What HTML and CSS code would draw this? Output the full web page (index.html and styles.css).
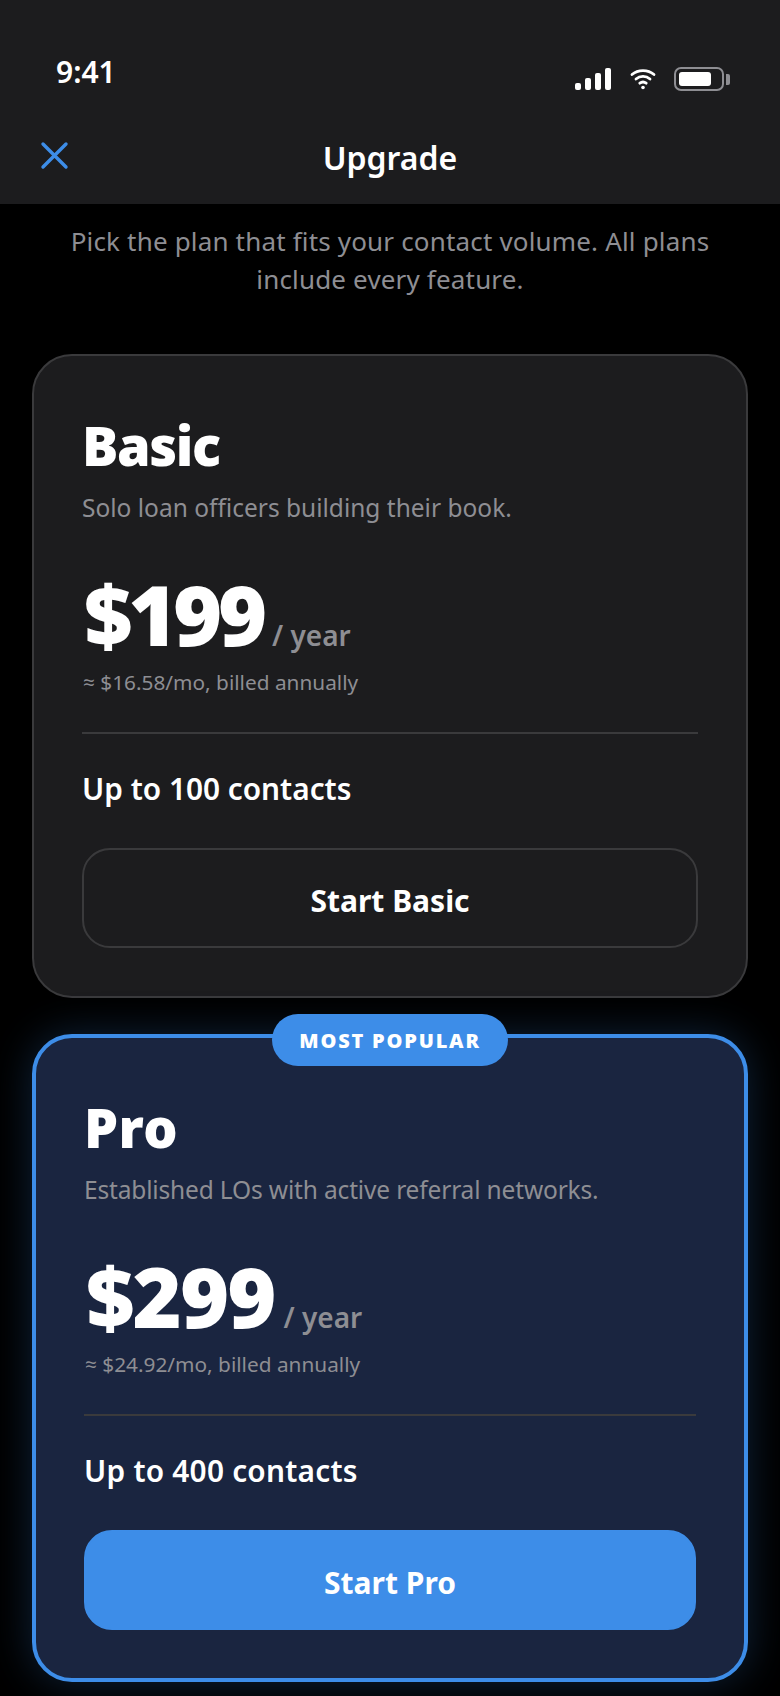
FILE: index.html
```html
<!DOCTYPE html>
<html lang="en">
<head>
    <meta charset="UTF-8">
    <meta name="viewport" content="width=device-width, initial-scale=1.0">
    <title>Upgrade</title>
    <link rel="stylesheet" href="styles.css">
</head>
<body>
    <div class="screen">
        <header class="top">
            <div class="status">
                <span class="time">9:41</span>
                <div class="status-icons">
                    <svg class="signal" width="37" height="22" viewBox="0 0 37 22" fill="#fff">
                        <rect x="0" y="15" width="6" height="7" rx="2"/>
                        <rect x="10" y="10" width="6" height="12" rx="2"/>
                        <rect x="20" y="5" width="6" height="17" rx="2"/>
                        <rect x="30" y="0" width="6" height="22" rx="2"/>
                    </svg>
                    <svg class="wifi" width="26" height="22" viewBox="0 0 26 22" fill="none" stroke="#fff" stroke-width="2.8" stroke-linecap="round">
                        <path d="M2 6.5C8 1.2 18 1.2 24 6.5"/>
                        <path d="M6 11C10 7.6 16 7.6 20 11"/>
                        <path d="M9.8 15.2C11.6 13.8 14.4 13.8 16.2 15.2"/>
                        <circle cx="13" cy="19.5" r="1.8" fill="#fff" stroke="none"/>
                    </svg>
                    <div class="battery"><div class="battery-fill"></div></div>
                    <div class="battery-cap"></div>
                </div>
            </div>
            <div class="nav">
                <svg class="close" width="30" height="30" viewBox="0 0 30 30" fill="none" stroke="#3d8de8" stroke-width="3.4" stroke-linecap="round">
                    <path d="M3 3L26 26M26 3L3 26"/>
                </svg>
                <h1>Upgrade</h1>
            </div>
        </header>
        <main class="content">
            <p class="intro">Pick the plan that fits your contact volume. All plans include every feature.</p>
            <section class="card">
                <h2>Basic</h2>
                <p class="tagline">Solo loan officers building their book.</p>
                <div class="price"><strong>$199</strong><span>/ year</span></div>
                <p class="monthly">≈ $16.58/mo, billed annually</p>
                <hr>
                <p class="limit">Up to 100 contacts</p>
                <div class="btn">Start Basic</div>
            </section>
            <section class="card pro">
                <div class="badge">MOST POPULAR</div>
                <h2>Pro</h2>
                <p class="tagline">Established LOs with active referral networks.</p>
                <div class="price"><strong>$299</strong><span>/ year</span></div>
                <p class="monthly">≈ $24.92/mo, billed annually</p>
                <hr>
                <p class="limit">Up to 400 contacts</p>
                <div class="btn">Start Pro</div>
            </section>
        </main>
    </div>
</body>
</html>
```

FILE: styles.css
```css
* {
    margin: 0;
    padding: 0;
    box-sizing: border-box;
}
body {
    background: #000;
    color: #fff;
    font-family: "Noto Sans", "Open Sans", sans-serif;
}
.screen {
    width: 780px;
    height: 1696px;
    overflow: hidden;
}
.top {
    height: 204px;
    background: #1c1c1e;
    padding: 0 50px 0 40px;
    position: relative;
}
.status {
    height: 124px;
    padding: 52px 0 0 16px;
    display: flex;
    justify-content: space-between;
}
.time {
    font-size: 30px;
    line-height: 40px;
    font-weight: 600;
}
.status-icons {
    display: flex;
    align-items: center;
    height: 32px;
    margin-top: 11px;
}
.wifi {
    margin-left: 18px;
}
.battery {
    width: 50px;
    height: 24px;
    margin-left: 18px;
    border: 2px solid #8e8e93;
    border-radius: 7px;
    padding: 3px;
}
.battery-fill {
    width: 32px;
    height: 100%;
    background: #fff;
    border-radius: 3px;
}
.battery-cap {
    width: 4px;
    height: 11px;
    margin-left: 2px;
    background: #8e8e93;
    border-radius: 0 2px 2px 0;
}
.nav {
    margin: 10px -50px 0 -40px;
    display: flex;
    justify-content: center;
}
.close {
    position: absolute;
    left: 40px;
    top: 141px;
}
h1 {
    font-size: 32px;
    line-height: 48px;
    font-weight: 600;
}
.content {
    padding: 0 32px;
}
.intro {
    margin: 18px 16px 0;
    font-size: 26px;
    line-height: 38px;
    letter-spacing: 0.17px;
    color: #8e8e93;
    text-align: center;
}
.card {
    position: relative;
    height: 644px;
    margin-top: 56px;
    padding: 57px 48px 0;
    background: #1c1c1e;
    border: 2px solid #3a3a3c;
    border-radius: 40px;
}
.card.pro {
    height: 648px;
    margin-top: 36px;
    background: #1a2540;
    border: 4px solid #3d8de8;
    box-shadow: 0 0 40px rgba(61, 141, 232, 0.25);
}
.badge {
    position: absolute;
    top: -24px;
    left: 50%;
    transform: translateX(-50%);
    width: 236px;
    height: 52px;
    line-height: 54px;
    text-align: center;
    font-size: 20px;
    font-weight: 900;
    letter-spacing: 1.8px;
    background: #3d8de8;
    border-radius: 26px;
}
h2 {
    font-size: 54px;
    line-height: 64px;
    font-weight: 900;
    letter-spacing: -1.4px;
}
.pro h2 {
    letter-spacing: 0.4px;
}
.tagline {
    margin-top: 13px;
    font-size: 24.5px;
    line-height: 36px;
    color: #8e8e93;
}
.pro .tagline {
    letter-spacing: -0.16px;
}
.price {
    margin-top: 36px;
    display: flex;
    align-items: baseline;
    gap: 9px;
}
.price strong {
    margin-left: 2px;
    font-size: 84px;
    line-height: 104px;
    font-weight: 900;
    letter-spacing: -4.3px;
}
.pro .price strong {
    letter-spacing: -1.9px;
}
.price span {
    font-size: 28px;
    font-weight: 600;
    color: #8e8e93;
}
.monthly {
    margin-top: 1px;
    margin-left: 1px;
    font-size: 20.8px;
    line-height: 30px;
    color: #8e8e93;
}
hr {
    margin-top: 35px;
    border: 0;
    border-top: 2px solid #3a3a3c;
}
.limit {
    margin-top: 33px;
    font-size: 29.8px;
    line-height: 44px;
    font-weight: 600;
}
.pro .limit {
    letter-spacing: 0.24px;
}
.btn {
    margin-top: 37px;
    height: 100px;
    line-height: 102px;
    text-align: center;
    font-size: 30px;
    font-weight: 700;
    border: 2px solid #3a3a3c;
    border-radius: 28px;
}
.pro .btn {
    background: #3d8de8;
    border-color: #3d8de8;
}
```
